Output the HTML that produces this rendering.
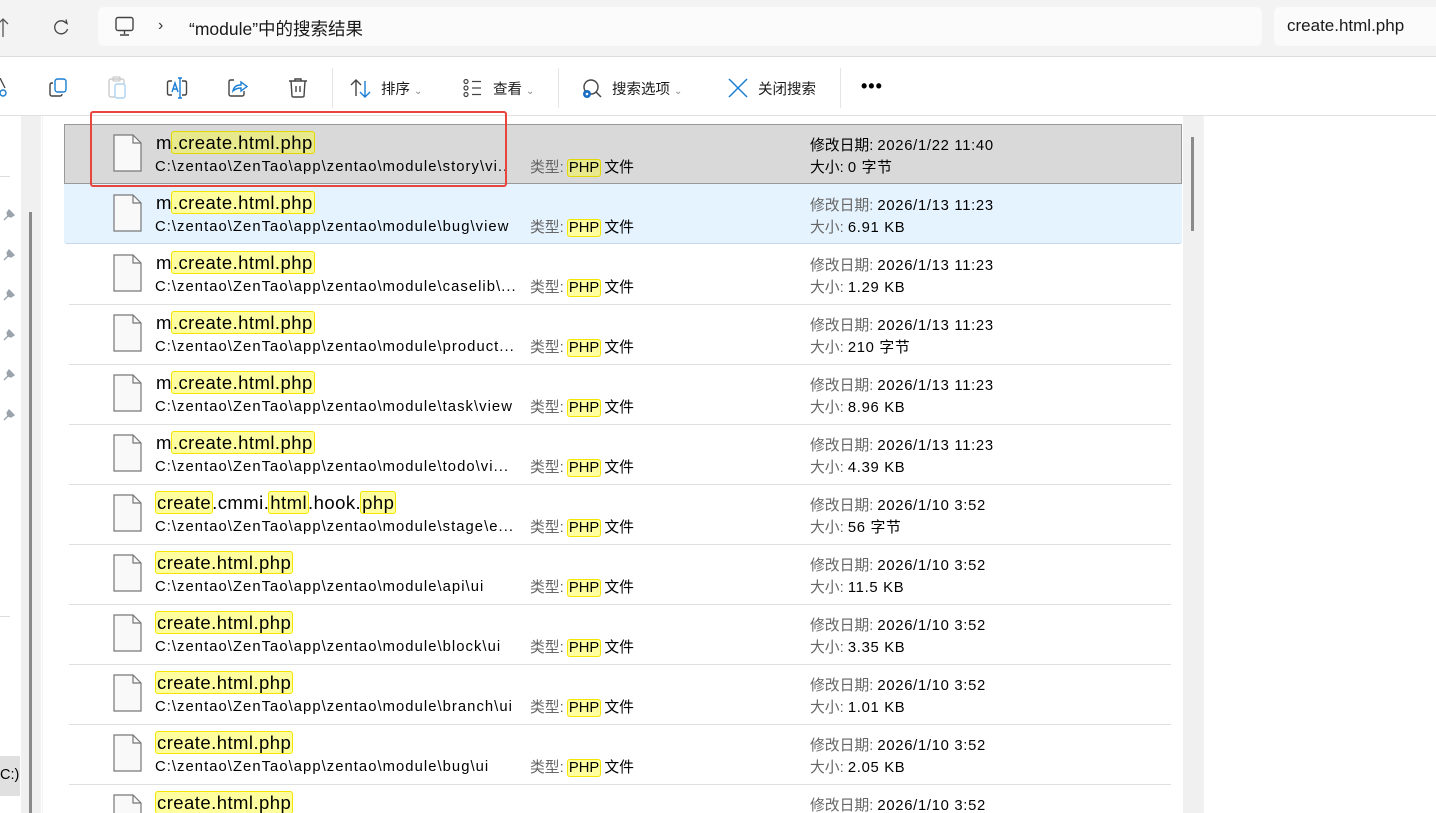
<!DOCTYPE html>
<html style="overflow:hidden;height:813px"><head><meta charset="utf-8"><style>
*{margin:0;padding:0;box-sizing:border-box}
body{width:1436px;height:813px;overflow:hidden;background:#fff;font-family:"Liberation Sans","Noto Sans CJK SC",sans-serif;position:relative;color:#000}
.a{position:absolute}
.top{left:0;top:0;width:1436px;height:57px;background:#f3f3f3;border-bottom:1px solid #dcdcdc}
.addr{left:98px;top:7px;width:1164px;height:39px;background:#fbfbfb;border-radius:6px}
.srch{left:1274px;top:7px;width:170px;height:39px;background:#fbfbfb;border-radius:6px}
.tb{left:0;top:58px;width:1436px;height:58px;border-bottom:1px solid #e0e0e0;background:#fff}
.tl{font-size:14.5px;color:#1a1a1a;top:78px}
.sep{width:1px;height:40px;background:#e5e5e5;top:68px}
.row{left:64px;width:1118px;height:60px}
.hl{background:#ffffa0;border:1px solid #f2e600;border-radius:3px;padding:0 1px;margin:0 -1px}
.sel .hl{background:#e8e88c;border-color:#e0d800}
.nm{font-size:18.5px;left:92px;top:8px;white-space:nowrap;letter-spacing:0.45px}
.pt{font-size:14.8px;left:91px;top:35px;white-space:nowrap;letter-spacing:1.05px}
.ty{font-size:14.8px;left:466px;top:32px;color:#666;white-space:nowrap}
.ty b{font-weight:normal;color:#000}
.d1{font-size:14.8px;left:746px;top:10px;color:#666;white-space:nowrap}
.d2{font-size:14.8px;left:746px;top:32px;color:#666;white-space:nowrap}
.d1 span,.d2 span{color:#000;letter-spacing:0.7px}
.ic{left:49px;top:10px}
.ln{left:69px;width:1102px;height:1px;background:#e0e0e0}
</style></head><body>
<div class="a top"></div>
<svg class="a" style="left:0;top:18px" width="10" height="20"><path d="M-2 3 L3 -2 L8 3 M3 -2 V16" stroke="#555" fill="none" stroke-width="1.3" transform="translate(0,3)"/></svg>
<svg class="a" style="left:51px;top:18px" width="20" height="20"><path d="M15.5 5.5 A6.5 6.5 0 1 0 16.5 11" stroke="#444" fill="none" stroke-width="1.3"/><path d="M12 3 L16 5.5 L15 1.5" stroke="#444" fill="none" stroke-width="1.3"/></svg>
<div class="a addr"></div>
<svg class="a" style="left:114px;top:16px" width="22" height="22"><rect x="2" y="1.5" width="17" height="13" rx="2" stroke="#444" fill="none" stroke-width="1.4"/><path d="M10.5 14.5 V18 M6 19 H15" stroke="#444" stroke-width="1.4"/></svg>
<div class="a" style="left:158px;top:17px;font-size:16px;color:#333">›</div>
<div class="a" style="left:189px;top:16px;font-size:17.5px;color:#1a1a1a">“module”中的搜索结果</div>
<div class="a srch"></div>
<div class="a" style="left:1287px;top:16px;font-size:17px;color:#1a1a1a">create.html.php</div>

<div class="a tb"></div>
<svg class="a" style="left:0;top:78px" width="10" height="22"><path d="M0 0 L5 10" stroke="#444" stroke-width="1.3"/><circle cx="3" cy="15" r="3" stroke="#1a7fd4" fill="none" stroke-width="1.4"/></svg>
<svg class="a" style="left:48px;top:78px" width="22" height="22"><rect x="7" y="1" width="11" height="13" rx="2.5" stroke="#1a7fd4" fill="none" stroke-width="1.4"/><path d="M5 5 H4 Q2 5 2 7 V16 Q2 18 4 18 H12 Q14 18 14 16" stroke="#444" fill="none" stroke-width="1.4"/></svg>
<svg class="a" style="left:107px;top:76px" width="22" height="24"><rect x="2" y="3" width="15" height="18" rx="2" stroke="#ccc" fill="none" stroke-width="1.4"/><rect x="6" y="1" width="7" height="4" rx="1" stroke="#ccc" fill="none" stroke-width="1.3"/><rect x="8" y="8" width="10" height="14" rx="2" stroke="#aed2f2" fill="#fff" stroke-width="1.4"/></svg>
<svg class="a" style="left:166px;top:77px" width="24" height="24"><path d="M6 4 H3 Q1.5 4 1.5 6 V16 Q1.5 18 3 18 H6 M16 4 H19 Q20.5 4 20.5 6 V16 Q20.5 18 19 18 H16" stroke="#444" fill="none" stroke-width="1.4"/><path d="M14 1 V21 M12 1 H16 M12 21 H16" stroke="#1a7fd4" stroke-width="1.4"/><path d="M6 15 L9 6 L12 15 M7 12 H11" stroke="#1a7fd4" fill="none" stroke-width="1.4"/></svg>
<svg class="a" style="left:227px;top:77px" width="22" height="22"><path d="M7 3 H4 Q2 3 2 5 V17 Q2 19 4 19 H15 Q17 19 17 17 V14" stroke="#444" fill="none" stroke-width="1.4"/><path d="M6 14 Q7 8 14 8 V5 L20 9.5 L14 14 V11 Q9 11 6 14Z" stroke="#1a7fd4" fill="none" stroke-width="1.4"/></svg>
<svg class="a" style="left:287px;top:77px" width="22" height="22"><path d="M2 4 H20 M8 4 V2 H14 V4 M4 4 L5 19 Q5 20 7 20 H15 Q17 20 17 19 L18 4 M9 9 V15 M13 9 V15" stroke="#444" fill="none" stroke-width="1.4"/></svg>
<div class="a sep" style="left:332px"></div>
<svg class="a" style="left:350px;top:78px" width="22" height="22"><path d="M6 18 V2 M1 7 L6 2 L11 7" stroke="#444" fill="none" stroke-width="1.4"/><path d="M15 3 V19 M10 14 L15 19 L20 14" stroke="#1a7fd4" fill="none" stroke-width="1.4"/></svg>
<div class="a tl" style="left:381px">排序 <span style="font-size:10px;color:#888">⌄</span></div>
<svg class="a" style="left:462px;top:78px" width="22" height="22"><circle cx="4" cy="3.5" r="2" stroke="#444" fill="none" stroke-width="1.2"/><circle cx="4" cy="10" r="2" stroke="#444" fill="none" stroke-width="1.2"/><circle cx="4" cy="16.5" r="2" stroke="#444" fill="none" stroke-width="1.2"/><path d="M10 3.5 H19 M10 10 H19 M10 16.5 H19" stroke="#444" stroke-width="1.3"/></svg>
<div class="a tl" style="left:493px">查看 <span style="font-size:10px;color:#888">⌄</span></div>
<div class="a sep" style="left:558px"></div>
<svg class="a" style="left:580px;top:78px" width="24" height="24"><circle cx="11" cy="9" r="7" stroke="#444" fill="none" stroke-width="1.4"/><path d="M16 14 L21 19" stroke="#444" stroke-width="1.5"/><circle cx="7" cy="16" r="4" fill="#1a6fc4"/><circle cx="7" cy="16" r="1.3" fill="#fff"/></svg>
<div class="a tl" style="left:612px">搜索选项 <span style="font-size:10px;color:#888">⌄</span></div>
<svg class="a" style="left:727px;top:77px" width="22" height="22"><path d="M2 2 L20 20 M20 2 L2 20" stroke="#1a7fd4" stroke-width="1.5"/></svg>
<div class="a tl" style="left:758px">关闭搜索</div>
<div class="a sep" style="left:840px"></div>
<div class="a" style="left:861px;top:76px;font-size:18px;font-weight:bold;letter-spacing:1px">•••</div>

<div class="a" style="left:0;top:176px;width:10px;height:1px;background:#ddd"></div>
<div class="a" style="left:21px;top:116px;width:20px;height:697px;background:#f0f0f0"></div>
<div class="a" style="left:29px;top:212px;width:3px;height:601px;background:#8a8a8a"></div>
<div class="a" style="left:42px;top:116px;width:1px;height:697px;background:#f4f4f4"></div>
<div class="a" style="left:0;top:616px;width:10px;height:1px;background:#ddd"></div>
<div class="a" style="left:0;top:756px;width:20px;height:40px;background:#e0e0e0;font-size:14.5px;padding-top:11px">C:)</div>
<svg class="a" style="left:2px;top:208px" width="14" height="220">
<g fill="#9aa3ab" stroke="#9aa3ab" stroke-width="1.3"><path d="M7 2 L12 7 L9 9 L6 8 L5 5Z M6 8 L2 12"/><path d="M7 42 L12 47 L9 49 L6 48 L5 45Z M6 48 L2 52"/><path d="M7 82 L12 87 L9 89 L6 88 L5 85Z M6 88 L2 92"/><path d="M7 122 L12 127 L9 129 L6 128 L5 125Z M6 128 L2 132"/><path d="M7 162 L12 167 L9 169 L6 168 L5 165Z M6 168 L2 172"/><path d="M7 202 L12 207 L9 209 L6 208 L5 205Z M6 208 L2 212"/></g></svg>

<div class="a" style="left:1183px;top:116px;width:20px;height:697px;background:#f0f0f0"></div>
<div class="a" style="left:1191px;top:137px;width:3px;height:94px;background:#8a8a8a"></div>
<div class="a" style="left:1203px;top:116px;width:1px;height:697px;background:#f4f4f4"></div>

<div class="a row sel" style="top:124px;background:#d9d9d9;border:1px solid #999">
<svg class="a ic" width="30" height="40" style="left:48px;top:9px"><path d="M1 1 H20 L28 9 V37 H1Z" fill="#f9f9f9" stroke="#777" stroke-width="1.2"/><path d="M20 1 V9 H28" fill="none" stroke="#777" stroke-width="1.2"/></svg>
<div class="a nm" style="left:91px;top:7px">m<span class="hl">.create.html.php</span></div>
<div class="a pt" style="left:90px;top:34px">C:\zentao\ZenTao\app\zentao\module\story\vi..</div>
<div class="a ty" style="left:465px;top:31px">类型: <span class="hl" style="color:#000">PHP</span><b> 文件</b></div>
<div class="a d1" style="left:745px;top:9px;color:#000">修改日期: <span>2026/1/22 11:40</span></div>
<div class="a d2" style="left:745px;top:31px;color:#000">大小: <span>0 字节</span></div>
</div>
<div class="a row" style="top:184px;background:#e5f3ff;border-bottom:1px solid #c4d8ea;border-radius:0 0 3px 3px">
<svg class="a ic" width="30" height="40"><path d="M1 1 H20 L28 9 V37 H1Z" fill="#f9f9f9" stroke="#777" stroke-width="1.2"/><path d="M20 1 V9 H28" fill="none" stroke="#777" stroke-width="1.2"/></svg>
<div class="a nm">m<span class="hl">.create.html.php</span></div>
<div class="a pt">C:\zentao\ZenTao\app\zentao\module\bug\view</div>
<div class="a ty">类型: <span class="hl" style="color:#000">PHP</span><b> 文件</b></div>
<div class="a d1">修改日期: <span>2026/1/13 11:23</span></div>
<div class="a d2">大小: <span>6.91 KB</span></div>
</div>
<div id="rows"></div>

<div class="a" style="left:90px;top:111px;width:417px;height:76px;border:2px solid #e8453c;border-radius:3px"></div>
<script>
var R=[
["m<span class='hl'>.create.html.php</span>","caselib\\...","2026/1/13 11:23","1.29 KB"],
["m<span class='hl'>.create.html.php</span>","product...","2026/1/13 11:23","210 字节"],
["m<span class='hl'>.create.html.php</span>","task\\view","2026/1/13 11:23","8.96 KB"],
["m<span class='hl'>.create.html.php</span>","todo\\vi...","2026/1/13 11:23","4.39 KB"],
["<span class='hl'>create</span>.cmmi.<span class='hl'>html</span>.hook.<span class='hl'>php</span>","stage\\e...","2026/1/10 3:52","56 字节"],
["<span class='hl'>create.html.php</span>","api\\ui","2026/1/10 3:52","11.5 KB"],
["<span class='hl'>create.html.php</span>","block\\ui","2026/1/10 3:52","3.35 KB"],
["<span class='hl'>create.html.php</span>","branch\\ui","2026/1/10 3:52","1.01 KB"],
["<span class='hl'>create.html.php</span>","bug\\ui","2026/1/10 3:52","2.05 KB"],
["<span class='hl'>create.html.php</span>","","2026/1/10 3:52",""]];
var h="";
R.forEach(function(r,i){var t=244+60*i;
if(i>0)h+="<div class='a ln' style='top:"+t+"px'></div>";
h+="<div class='a row' style='top:"+t+"px;"+(t+60>813?"height:"+(813-t)+"px;overflow:hidden":"")+"'><svg class='a ic' width='30' height='40'><path d='M1 1 H20 L28 9 V37 H1Z' fill='#f9f9f9' stroke='#777' stroke-width='1.2'/><path d='M20 1 V9 H28' fill='none' stroke='#777' stroke-width='1.2'/></svg><div class='a nm'>"+r[0]+"</div>";
if(r[1])h+="<div class='a pt'>C:\\zentao\\ZenTao\\app\\zentao\\module\\"+r[1]+"</div><div class='a ty'>类型: <span class='hl' style='color:#000'>PHP</span><b> 文件</b></div>";
h+="<div class='a d1'>修改日期: <span>"+r[2]+"</span></div>";
if(r[3])h+="<div class='a d2'>大小: <span>"+r[3]+"</span></div>";
h+="</div>";});
document.getElementById("rows").innerHTML=h;
</script>
</body></html>
